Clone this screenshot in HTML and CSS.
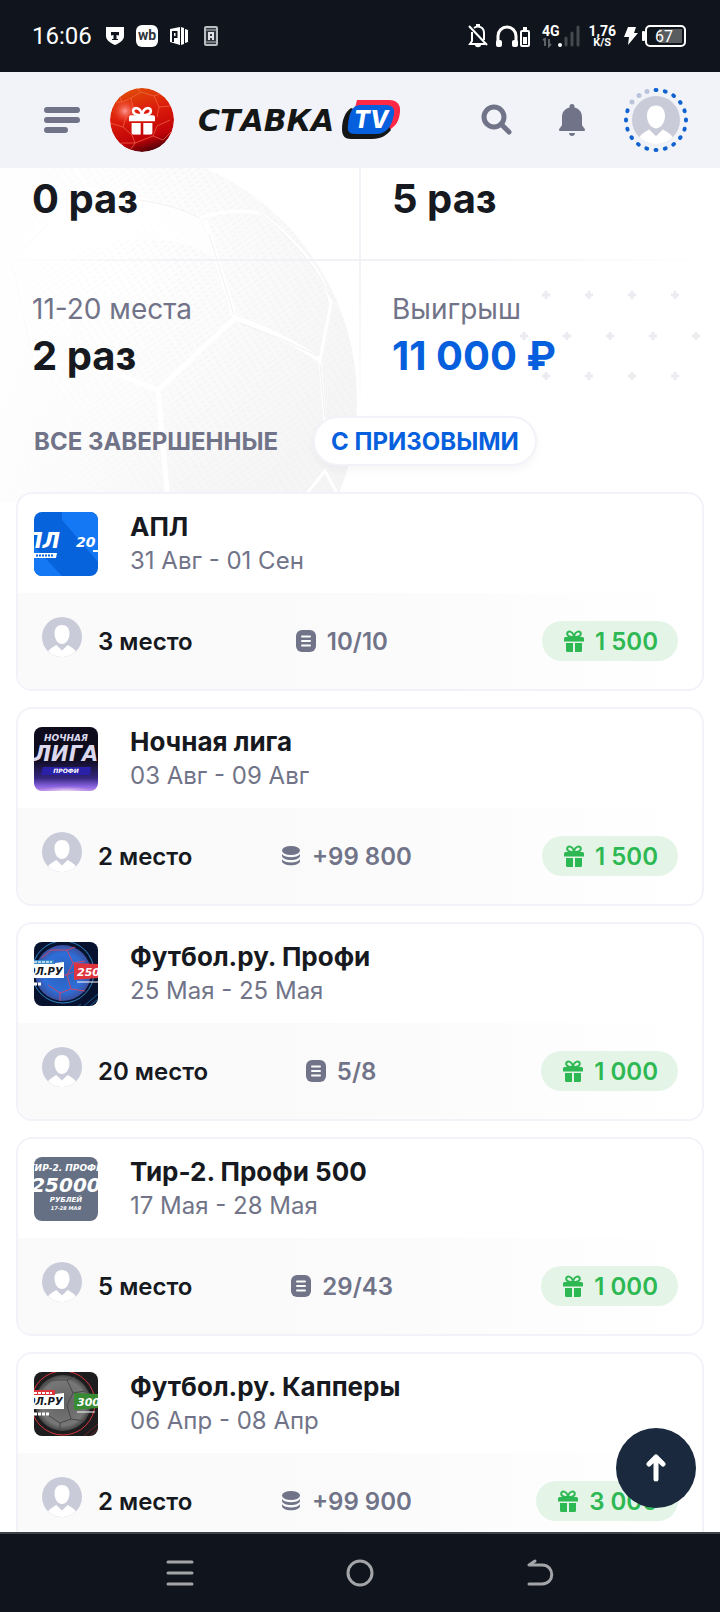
FILE: index.html
```html
<!DOCTYPE html>
<html lang="ru">
<head>
    <meta charset="UTF-8">
    <meta name="viewport" content="width=device-width, initial-scale=1.0">
    <title>Ставка TV</title>
    <link rel="stylesheet" href="styles.css">
</head>
<body>
    <!-- Shared icons -->
    <svg class="sprite" aria-hidden="true">
        <symbol id="avatar" viewBox="0 0 40 40">
            <circle cx="20" cy="20" r="20" fill="#c9cbd8"/>
            <path fill="#fff" d="M20 8c-4.600 0-7.500 3.400-7.500 8.500 0 5.700 3.400 10.500 7.500 10.500s7.500-4.800 7.500-10.500C27.500 11.400 24.600 8 20 8zM6 34.300c2-2.700 4.700-4.300 8.300-6.300L20 33.500l5.700-5.500c3.600 2 6.300 3.600 8.300 6.300A20 20 0 0 1 6 34.300z"/>
        </symbol>
        <symbol id="gift" viewBox="0 0 20 22">
            <path fill="none" stroke="currentColor" stroke-width="2" d="M10 7C7 7 3 6.500 3.200 3.600 3.400.500 8.500.400 10 6.500 11.500.400 16.600.500 16.800 3.600 17 6.500 13 7 10 7z"/>
            <path fill="currentColor" d="M1.500 7h7v4.500H0v-3A1.500 1.500 0 0 1 1.500 7zM11.500 7h7A1.500 1.500 0 0 1 20 8.500v3h-8.500zM8.500 7h3v4.500h-3zM2 13h7v9H3.500A1.500 1.500 0 0 1 2 20.500zM11 13h7v7.500a1.500 1.500 0 0 1-1.500 1.500H11z"/>
        </symbol>
        <symbol id="bets" viewBox="0 0 20 22">
            <rect width="20" height="22" rx="6" fill="currentColor"/>
            <path stroke="#fbfbfc" stroke-width="2" stroke-linecap="round" d="M6 6.500h8M6 11h8M6 15.500h8"/>
        </symbol>
        <symbol id="coins" viewBox="0 0 20 22">
            <ellipse cx="10" cy="5.500" rx="9" ry="4.500" fill="currentColor"/>
            <path fill="currentColor" d="M1 9c1.500 2.400 5 3.200 9 3.200s7.500-.800 9-3.200v2c-.500 2.500-4.500 4-9 4s-8.500-1.500-9-4zM1 14.200c1.500 2.400 5 3.200 9 3.200s7.500-.800 9-3.200v2c-.500 2.500-4.500 4-9 4s-8.500-1.500-9-4z"/>
        </symbol>
    </svg>

    <!-- Phone status bar -->
    <div class="status-bar">
        <span class="time">16:06</span>
        <svg width="18" height="20" viewBox="0 0 18 20"><path fill="#fff" d="M0 1h18v9c0 4-4 7-9 9-5-2-9-5-9-9z"/><path fill="#10151d" d="M5 6h8v3.500L10.500 9v4H12v1H6v-1h1.500V9L5 9.500z"/></svg>
        <svg width="22" height="22" viewBox="0 0 22 22"><rect width="22" height="22" rx="6" fill="#fff"/><text class="wb" x="11" y="15" text-anchor="middle">wb</text></svg>
        <svg width="18" height="20" viewBox="0 0 18 20"><path fill="#fff" d="M0 3l10-2v18L0 16zM11 1l3 1v16l-3 1zM15 3l3 1v12l-3 1z"/><path fill="none" stroke="#10151d" stroke-width="2" d="M3 16V6h3.500v5H3"/></svg>
        <svg class="sim" width="14" height="20" viewBox="0 0 14 20"><rect x="1" y="1" width="12" height="18" rx="1" fill="#30363d" stroke="#b9bcc0" stroke-width="2"/><path stroke="#b9bcc0" d="M2 4h10M2 16h10"/><path fill="none" stroke="#e0e2e5" stroke-width="2" d="M5 14V7h4v7M5 11h4"/></svg>
        <span class="spacer"></span>
        <svg width="20" height="24" viewBox="0 0 20 24"><path fill="none" stroke="#fff" stroke-width="2" d="M4 8v9l-2 3h15M6 4c4-3 10-1 10 5v7"/><path stroke="#fff" stroke-width="2" d="M1 2l18 19"/><path fill="#fff" d="M8 0h4v3H8zM7 21h6c0 3-6 3-6 0z"/></svg>
        <svg width="34" height="24" viewBox="0 0 34 24"><path fill="none" stroke="#fff" stroke-width="3" d="M2 21v-9a9 9 0 0 1 18 0v9"/><rect y="16" width="6" height="7" rx="2" fill="#fff"/><rect x="16" y="16" width="6" height="7" rx="2" fill="#fff"/><rect x="25" y="7" width="8" height="15" rx="1" fill="none" stroke="#fff" stroke-width="2"/><path fill="#fff" d="M27 3h4v3h-4zM27 13h4v7h-4z"/></svg>
        <svg class="signal" width="38" height="24" viewBox="0 0 38 24"><text class="net" x="0" y="12">4G</text><path stroke="#5d6269" stroke-width="2" fill="none" d="M1 16l2-1v7M7 15v7l2-2"/><circle cx="18" cy="21" r="2" fill="#fff"/><path stroke="#44494f" stroke-width="3" stroke-linecap="round" d="M24 14v7M30 9v12M36 3v18"/></svg>
        <span class="speed"><b>1,76</b><small>K/S</small></span>
        <svg class="bolt" width="14" height="20" viewBox="0 0 14 20"><path fill="#fff" d="M4 1h8l-2 6h4L4 19l1-8H0z"/></svg>
        <svg class="battery" width="44" height="22" viewBox="0 0 44 22">
            <rect y="6" width="3" height="10" rx="1" fill="#fff"/>
            <rect x="4" y="1" width="39" height="20" rx="4" fill="none" stroke="#fff" stroke-width="2"/>
            <path fill="#5a5d60" d="M17 4h23v14H17z"/>
            <text x="22" y="17" text-anchor="middle">67</text>
        </svg>
    </div>

    <header class="header">
        <button class="icon-btn menu-btn" aria-label="Меню">
            <svg width="36" height="26" viewBox="0 0 36 26"><path stroke="#717488" stroke-width="6" stroke-linecap="round" d="M3 3h30M3 13h30M3 23h18"/></svg>
        </button>
        <a class="bonus" href="#" aria-label="Бонусы">
            <svg width="64" height="64" viewBox="0 0 64 64">
                <defs>
                    <linearGradient id="red" x1="0.300" y1="0" x2="0.600" y2="1"><stop offset="0" stop-color="#e04d08"/><stop offset="0.400" stop-color="#dc1d0b"/><stop offset="0.800" stop-color="#bf0208"/><stop offset="1" stop-color="#4b0008"/></linearGradient>
                    <radialGradient id="shine"><stop offset="0" stop-color="#ff9a94"/><stop offset="1" stop-color="#f0301a" stop-opacity="0"/></radialGradient>
                    <clipPath id="bonusClip"><circle cx="32" cy="32" r="32"/></clipPath>
                </defs>
                <g clip-path="url(#bonusClip)">
                    <circle cx="32" cy="32" r="32" fill="url(#red)"/>
                    <circle cx="15" cy="23" r="13" fill="url(#shine)"/>
                    <path fill="none" stroke="#f4694a" stroke-opacity="0.700" d="M0 14l12 0 9-4 10-6 13 4 5 11-2 10M21 10l2 9-7 10-3 10-13-4M12 14L8 4M44 8l8-3M49 19l11-1M31 4L26 0M13 39l9 8 3 8-6 9M25 55l18-7 10 4 8-8M43 48l4-10 13-6M25 55l-14 0"/>
                </g>
                <svg x="19" y="18" width="26" height="29" viewBox="0 0 20 22" color="#fff"><use href="#gift"/></svg>
            </svg>
        </a>
        <a class="logo" href="#">
            <span class="logo-text">СТАВКА</span>
            <svg width="58" height="40" viewBox="0 0 58 40">
                <path fill="#ff2946" d="M15 0h32c8 0 12 5 11 12-1 9-4 15-13 19L13 8z"/>
                <path fill="#141716" d="M9 8C3 12 0 20 0 29c0 7 3 10 9 10h21c9 0 15-4 19-9l-5-8z"/>
                <path fill="#0660dd" d="M18 5h26c6 0 9 3 8 9-2 12-7 20-18 20H13c-6 0-8-3-7-9C7 14 10 5 18 5z"/>
                <text class="logo-tv" x="29" y="28" text-anchor="middle">TV</text>
            </svg>
        </a>
        <span class="spacer"></span>
        <button class="icon-btn search-btn" aria-label="Поиск">
            <svg width="32" height="32" viewBox="0 0 32 32"><circle cx="13" cy="13" r="10" fill="none" stroke="#717488" stroke-width="5"/><path stroke="#717488" stroke-width="5" stroke-linecap="round" d="M20 20l8 8"/></svg>
        </button>
        <button class="icon-btn bell-btn" aria-label="Уведомления">
            <svg width="26" height="32" viewBox="0 0 26 32"><path fill="#717488" d="M10.500 2.500a2.500 2.500 0 0 1 5 0v1C20 4.500 23 8 23 13v7.500c0 2 3 3.500 3 5.500 0 1-1 1-2 1H2c-1 0-2 0-2-1 0-2 3-3.500 3-5.500V13c0-5 3-8.500 7.500-9.500zM10 29h6c0 4-6 4-6 0z"/></svg>
        </button>
        <a class="profile" href="#" aria-label="Профиль">
            <svg width="64" height="64" viewBox="0 0 64 64">
                <circle cx="32" cy="32" r="30" fill="none" stroke="#0f62cf" stroke-width="4" stroke-linecap="round" pathLength="200" stroke-dasharray="1 9" stroke-dashoffset="0.500" transform="rotate(-90 32 32)"/>
                <path fill="none" stroke="#f2f3f8" stroke-width="7" d="M5 18A30 30 0 0 1 27 2"/>
                <g fill="#b9c4da"><circle cx="8" cy="14" r="2.500"/><circle cx="15" cy="7.500" r="2.500"/><circle cx="23" cy="3.500" r="2.500"/></g>
                <use href="#avatar" x="8" y="8" width="48" height="48"/>
            </svg>
        </a>
    </header>

    <main class="content">
        <!-- Faded ball behind the statistics -->
        <svg class="bg-ball" width="380" height="334" viewBox="0 0 380 334" aria-hidden="true">
            <defs>
                <pattern id="weave" width="7" height="5" patternUnits="userSpaceOnUse" patternTransform="rotate(-34)"><path stroke="#ececee" stroke-width="1" stroke-dasharray="4 3" d="M0 2h7"/></pattern>
                <radialGradient id="ballShade" gradientUnits="userSpaceOnUse" cx="90" cy="90" r="290"><stop offset="0.100" stop-color="#fff"/><stop offset="0.500" stop-color="#fbfbfb"/><stop offset="1" stop-color="#f5f5f5"/></radialGradient>
                <linearGradient id="fade"><stop offset="0" stop-color="#fff" stop-opacity="0.800"/><stop offset="0.500" stop-color="#fff" stop-opacity="0"/></linearGradient>
            </defs>
            <circle cx="104" cy="232" r="253" fill="url(#ballShade)"/>
            <circle cx="104" cy="232" r="253" fill="url(#weave)" opacity="0.600"/>
            <path fill="#fff" opacity="0.700" d="M88 32Q140 26 200 50L215 90Q150 50 60 95L12 88Q40 45 88 32z"/>
            <g fill="none" stroke="#fff" stroke-width="5">
                <path d="M235 150L158 222L102 200M158 222L168 334M235 150L205 52M235 150Q280 165 320 192"/>
                <path stroke-width="3" d="M88 20L70 -6M88 20Q150 30 200 50Q230 40 260 45Q320 90 331 135L320 192L326 270M300 334L325 303L342 334M102 200L35 193L12 90L88 20"/>
            </g>
            <g fill="none" stroke="#f0f0f2">
                <path d="M140 32Q175 37 200 50M209 66L234 147M240 155Q280 169 318 188M12 92L33 190M260 45Q310 85 331 130M320 196L325 250M12 90L50 55"/>
            </g>
            <rect width="380" height="334" fill="url(#fade)"/>
        </svg>
        <svg class="bg-pluses" width="200" height="100" viewBox="0 0 200 100" aria-hidden="true">
            <path stroke="#ebecf2" stroke-width="3" d="M38 9h8M42 5v8M81 9h8M85 5v8M124 9h8M128 5v8M167 9h8M171 5v8M16 50h8M20 46v8M59 50h8M63 46v8M102 50h8M106 46v8M145 50h8M149 46v8M188 50h8M192 46v8M38 90h8M42 86v8M81 90h8M85 86v8M124 90h8M128 86v8M167 90h8M171 86v8"/>
        </svg>

        <div class="stats">
            <div class="stat first-row"><strong>0 раз</strong></div>
            <div class="stat first-row"><strong>5 раз</strong></div>
            <div class="line"></div>
            <div class="stat"><span>11-20 места</span><strong>2 раз</strong></div>
            <div class="stat"><span>Выигрыш</span><strong class="prize">11 000 ₽</strong></div>
        </div>

        <div class="tabs">
            <button class="tab">ВСЕ ЗАВЕРШЕННЫЕ</button>
            <button class="tab active">С ПРИЗОВЫМИ</button>
        </div>

        <div class="tournaments">
            <a class="card" href="#">
                <div class="card-top">
                    <svg class="thumb" viewBox="0 0 64 64" aria-hidden="true">
                        <rect width="64" height="64" fill="#0663dc"/>
                        <path fill="#1477f3" d="M28 0h36v50L28 8zM0 34l28 30H0z"/>
                        <text class="art" x="-9" y="36" font-size="21">ПЛ</text>
                        <text class="art" x="42" y="35" font-size="14">20</text>
                        <path fill="#fff" d="M0 41h23l-1 5H0z"/><path stroke="#0663dc" stroke-width="2" stroke-dasharray="2 1" d="M2 43.500h18"/>
                        <path stroke="#fff" stroke-width="2" d="M59 39h5"/>
                    </svg>
                    <div class="card-info"><h2>АПЛ</h2><p>31 Авг - 01 Сен</p></div>
                </div>
                <div class="card-bottom">
                    <div class="place"><svg class="avatar"><use href="#avatar"/></svg>3 место</div>
                    <div class="score"><svg class="icon"><use href="#bets"/></svg>10/10</div>
                    <div class="reward"><svg class="icon"><use href="#gift"/></svg>1 500</div>
                </div>
            </a>

            <a class="card" href="#">
                <div class="card-top">
                    <svg class="thumb" viewBox="0 0 64 64" aria-hidden="true">
                        <defs>
                            <linearGradient id="night" x2="0" y2="1"><stop offset="0.500" stop-color="#0d0b1c"/><stop offset="0.800" stop-color="#36267f"/><stop offset="0.920" stop-color="#8460dc"/><stop offset="1" stop-color="#b98ae8"/></linearGradient>
                            <radialGradient id="glow"><stop offset="0" stop-color="#fff"/><stop offset="1" stop-color="#d8a0e8" stop-opacity="0"/></radialGradient>
                        </defs>
                        <rect width="64" height="64" fill="url(#night)"/>
                        <ellipse cx="32" cy="65" rx="30" ry="6" fill="url(#glow)"/>
                        <text class="art night" x="32" y="14" font-size="9" text-anchor="middle">НОЧНАЯ</text>
                        <text class="art night" x="32" y="34" font-size="21" text-anchor="middle">ЛИГА</text>
                        <path fill="#2b21a8" d="M9 40h48l-1 8H7z"/>
                        <text class="art" x="32" y="46" font-size="6" text-anchor="middle">ПРОФИ</text>
                    </svg>
                    <div class="card-info"><h2>Ночная лига</h2><p>03 Авг - 09 Авг</p></div>
                </div>
                <div class="card-bottom">
                    <div class="place"><svg class="avatar"><use href="#avatar"/></svg>2 место</div>
                    <div class="score"><svg class="icon coins"><use href="#coins"/></svg>+99 800</div>
                    <div class="reward"><svg class="icon"><use href="#gift"/></svg>1 500</div>
                </div>
            </a>

            <a class="card" href="#">
                <div class="card-top">
                    <svg class="thumb" viewBox="0 0 64 64" aria-hidden="true">
                        <defs><radialGradient id="blueBall"><stop offset="0" stop-color="#2b5fb8"/><stop offset="0.700" stop-color="#2e6ed8"/><stop offset="1" stop-color="#3b4f9e"/></radialGradient></defs>
                        <rect width="64" height="64" fill="#07122e"/>
                        <circle cx="29" cy="30" r="31" fill="none" stroke="#2f86c8"/>
                        <circle cx="29" cy="31" r="28" fill="url(#blueBall)"/>
                        <path fill="none" stroke="#c8486e" d="M17 8h16l6 13-6 12 4 14-11 4-12-8M39 21l12-2M17 8L8 16M33 8l8-3M33 33H22M26 51v8M37 47l14 2M33 33l6-3"/>
                        <path stroke="#1b5d94" d="M50 64l14-12M56 64l8-7M44 64l3-2"/>
                        <path fill="#3a8cc8" d="M0 18h20v4H0z"/><path fill="#fff" d="M0 22h21v-1l9-1v16H0z"/><path fill="#dd343d" d="M40 21l24 1v14l-24 2z"/>
                        <path stroke="#b9d6ee" stroke-width="2" stroke-dasharray="3 1" d="M0 20h18"/>
                        <text class="art dark" x="-7" y="33" font-size="10">ОЛ.РУ</text>
                        <text class="art" x="43" y="34" font-size="11">250</text>
                        <path stroke="#fff" d="M43 40h21"/><path stroke="#fff" stroke-width="3" stroke-dasharray="3 1" d="M0 42h7"/>
                    </svg>
                    <div class="card-info"><h2>Футбол.ру. Профи</h2><p>25 Мая - 25 Мая</p></div>
                </div>
                <div class="card-bottom">
                    <div class="place"><svg class="avatar"><use href="#avatar"/></svg>20 место</div>
                    <div class="score"><svg class="icon"><use href="#bets"/></svg>5/8</div>
                    <div class="reward"><svg class="icon"><use href="#gift"/></svg>1 000</div>
                </div>
            </a>

            <a class="card" href="#">
                <div class="card-top">
                    <svg class="thumb" viewBox="0 0 64 64" aria-hidden="true">
                        <rect width="64" height="64" fill="#657084"/>
                        <text class="art" x="32" y="14" font-size="9" text-anchor="middle">ТИР-2. ПРОФИ</text>
                        <text class="art" x="32" y="35" font-size="20" text-anchor="middle">25000</text>
                        <text class="art" x="32" y="45" font-size="7" text-anchor="middle">РУБЛЕЙ</text>
                        <text class="art" x="32" y="53" font-size="5" text-anchor="middle">17-28 МАЯ</text>
                    </svg>
                    <div class="card-info"><h2>Тир-2. Профи 500</h2><p>17 Мая - 28 Мая</p></div>
                </div>
                <div class="card-bottom">
                    <div class="place"><svg class="avatar"><use href="#avatar"/></svg>5 место</div>
                    <div class="score"><svg class="icon"><use href="#bets"/></svg>29/43</div>
                    <div class="reward"><svg class="icon"><use href="#gift"/></svg>1 000</div>
                </div>
            </a>

            <a class="card" href="#">
                <div class="card-top">
                    <svg class="thumb" viewBox="0 0 64 64" aria-hidden="true">
                        <defs><radialGradient id="greyBall"><stop offset="0" stop-color="#606060"/><stop offset="0.800" stop-color="#777"/><stop offset="1" stop-color="#444"/></radialGradient></defs>
                        <rect width="64" height="64" fill="#1d1d1f"/>
                        <circle cx="29" cy="31" r="32" fill="none" stroke="#d8363d"/>
                        <circle cx="29" cy="31" r="28" fill="url(#greyBall)"/>
                        <path fill="none" stroke="#484848" d="M17 8h16l6 13-6 12 4 14-11 4-12-8M39 21l12-2M17 8L8 16M33 8l8-3M26 51v8M37 47l14 2"/>
                        <path stroke="#6d2428" d="M50 64l14-12M56 64l8-7"/>
                        <path fill="#dd343d" d="M0 18h21v5H0z"/><path fill="#fff" d="M0 23h21v-1l9-1v16H0z"/><path fill="#388b30" d="M40 21l24 1v14l-24 2z"/>
                        <path stroke="#fff" stroke-width="2" stroke-dasharray="3 1" d="M0 21h18"/>
                        <text class="art dark" x="-7" y="33" font-size="10">ОЛ.РУ</text>
                        <text class="art" x="43" y="34" font-size="11">300</text>
                        <path stroke="#fff" d="M43 40h18"/><path stroke="#fff" stroke-width="3" stroke-dasharray="3 1" d="M0 42h15"/>
                    </svg>
                    <div class="card-info"><h2>Футбол.ру. Капперы</h2><p>06 Апр - 08 Апр</p></div>
                </div>
                <div class="card-bottom">
                    <div class="place"><svg class="avatar"><use href="#avatar"/></svg>2 место</div>
                    <div class="score"><svg class="icon coins"><use href="#coins"/></svg>+99 900</div>
                    <div class="reward"><svg class="icon"><use href="#gift"/></svg>3 000</div>
                </div>
            </a>
        </div>

        <button class="to-top" aria-label="Наверх">
            <svg width="20" height="28" viewBox="0 0 20 28"><path fill="none" stroke="#fff" stroke-width="5" stroke-linecap="round" stroke-linejoin="round" d="M10 25V3M3 10l7-7 7 7"/></svg>
        </button>
    </main>

    <!-- Phone navigation -->
    <nav class="phone-nav">
        <button aria-label="Приложения"><svg width="28" height="28" viewBox="0 0 28 28"><path stroke="#a3a5a8" stroke-width="3" stroke-linecap="round" d="M2 3h24M2 14h24M2 25h24"/></svg></button>
        <button aria-label="Домой"><svg width="28" height="28" viewBox="0 0 28 28"><circle cx="14" cy="14" r="12" fill="none" stroke="#a3a5a8" stroke-width="3"/></svg></button>
        <button aria-label="Назад"><svg width="28" height="28" viewBox="0 0 28 28"><path fill="none" stroke="#a3a5a8" stroke-width="3" stroke-linecap="round" stroke-linejoin="round" d="M9 2L3 6h13c13 0 13 19 0 19H3"/></svg></button>
    </nav>
</body>
</html>
```

FILE: styles.css
```css
* {
    margin: 0;
    padding: 0;
    box-sizing: border-box;
}
body {
    font-family: Inter, "Liberation Sans", sans-serif;
    background: #fff;
    color: #161920;
    height: 100vh;
    display: flex;
    flex-direction: column;
}
button {
    background: none;
    border: none;
    font: inherit;
    cursor: pointer;
}
a {
    color: inherit;
    text-decoration: none;
}
svg {
    display: block;
    flex-shrink: 0;
}
.sprite {
    position: absolute;
    width: 0;
    height: 0;
}
.spacer {
    flex: 1;
}

/* Status bar */
.status-bar {
    height: 72px;
    flex-shrink: 0;
    display: flex;
    align-items: center;
    gap: 12px;
    padding: 0 34px 0 32px;
    background: #10151d;
    color: #fff;
    font-family: Roboto, sans-serif;
}
.time {
    font-size: 24px;
    margin-right: 2px;
}
.sim {
    margin-left: 4px;
}
.wb {
    font: bold 14px Roboto, sans-serif;
    fill: #30353c;
}
.status-bar .spacer + svg {
    margin-right: -4px;
}
.net {
    font: bold 14px Roboto, sans-serif;
    fill: #fff;
}
.speed {
    display: flex;
    flex-direction: column;
    align-items: center;
    margin-left: -4px;
}
.speed b {
    font-size: 14px;
    line-height: 14px;
}
.speed small {
    font-size: 11px;
    line-height: 10px;
    font-weight: bold;
}
.bolt {
    margin-left: -4px;
}
.battery {
    margin-left: -8px;
    font-size: 16px;
    fill: #fff;
}

/* Site header */
.header {
    height: 96px;
    flex-shrink: 0;
    display: flex;
    align-items: center;
    padding: 0 32px 0 44px;
    background: #f2f3f8;
}
.bonus {
    margin: 0 24px 0 30px;
}
.logo {
    display: flex;
    align-items: center;
    gap: 8px;
}
.logo-text {
    font: italic bold 30px "DejaVu Sans", sans-serif;
    color: #141716;
}
.logo-tv {
    font: italic 800 24px Inter, sans-serif;
    fill: #fff;
}
.search-btn {
    margin-right: 46px;
}
.bell-btn {
    margin-right: 39px;
}

/* Statistics */
.content {
    flex: 1;
    min-height: 0;
    position: relative;
    overflow: hidden;
}
.bg-ball {
    position: absolute;
    top: 0;
    left: 0;
    z-index: -1;
}
.bg-pluses {
    position: absolute;
    top: 118px;
    right: 16px;
    z-index: -1;
}
.stats {
    display: grid;
    grid-template-columns: 1fr 1fr;
    background: linear-gradient(#f2f3f8 40%, transparent) 50% 0 / 2px 100% no-repeat;
}
.stat {
    display: flex;
    flex-direction: column;
    gap: 5px;
    padding: 30px 32px 36px;
}
.first-row {
    padding-top: 7px;
}
.line {
    grid-column: 1 / -1;
    height: 2px;
    background: linear-gradient(90deg, transparent, #f1f2f6 30%, #f1f2f6 60%, transparent 98%);
}
.stat span {
    font-size: 28px;
    line-height: 36px;
    color: #717488;
}
.stat strong {
    font-size: 40px;
    line-height: 48px;
    font-weight: 700;
}
.stat .prize {
    color: #0660dd;
}

/* Tabs */
.tabs {
    display: flex;
    gap: 17px;
    padding: 0 16px 26px;
}
.tab {
    height: 50px;
    padding: 0 16px;
    border: 2px solid transparent;
    border-radius: 25px;
    font-size: 24px;
    font-weight: 700;
    color: #717488;
}
.tab.active {
    background: #fff;
    border-color: #f2f3f8;
    box-shadow: 0 4px 8px rgba(20, 25, 60, 0.04);
    color: #0660dd;
}

/* Tournament cards */
.tournaments {
    display: flex;
    flex-direction: column;
    gap: 16px;
    padding: 0 16px;
}
.card {
    border: 2px solid #f2f3f8;
    border-radius: 16px;
    background: #fff;
    overflow: hidden;
}
.card-top {
    display: flex;
    gap: 32px;
    padding: 18px 16px 13px;
}
.thumb {
    width: 64px;
    height: 64px;
    border-radius: 8px;
    overflow: hidden;
}
.art {
    font-family: "DejaVu Sans", sans-serif;
    font-weight: bold;
    font-style: italic;
    fill: #fff;
}
.art.night {
    fill: #dcd9ee;
}
.art.dark {
    fill: #14181f;
}
.card-info h2 {
    font-size: 26px;
    line-height: 30px;
    font-weight: 700;
}
.card-info p {
    font-size: 24px;
    line-height: 38px;
    color: #717488;
}
.card-bottom {
    height: 96px;
    display: grid;
    grid-template-columns: 7fr auto 8fr;
    align-items: center;
    padding: 0 24px;
    background: linear-gradient(90deg, #fafafb 40%, #fff);
    font-size: 24px;
    font-weight: 600;
}
.place, .score, .reward {
    display: flex;
    align-items: center;
}
.place {
    gap: 16px;
}
.avatar {
    width: 40px;
    height: 40px;
    margin-bottom: 8px;
}
.icon {
    width: 20px;
    height: 22px;
}
.icon.coins {
    margin-left: 6px;
}
.score {
    gap: 11px;
    color: #717488;
}
.reward {
    gap: 11px;
    height: 40px;
    justify-self: end;
    padding: 0 20px 0 22px;
    border-radius: 20px;
    background: #e4f5e8;
    color: #2eb853;
}

.to-top {
    position: absolute;
    right: 24px;
    bottom: 24px;
    width: 80px;
    height: 80px;
    border-radius: 50%;
    background: #1a293e;
    display: flex;
    align-items: center;
    justify-content: center;
}

/* Phone navigation */
.phone-nav {
    height: 80px;
    flex-shrink: 0;
    display: grid;
    grid-template-columns: 1fr 1fr 1fr;
    place-items: center;
    padding: 0 12.5%;
    background: #10151d;
    border-top: 2px solid #3d4349;
}
```
